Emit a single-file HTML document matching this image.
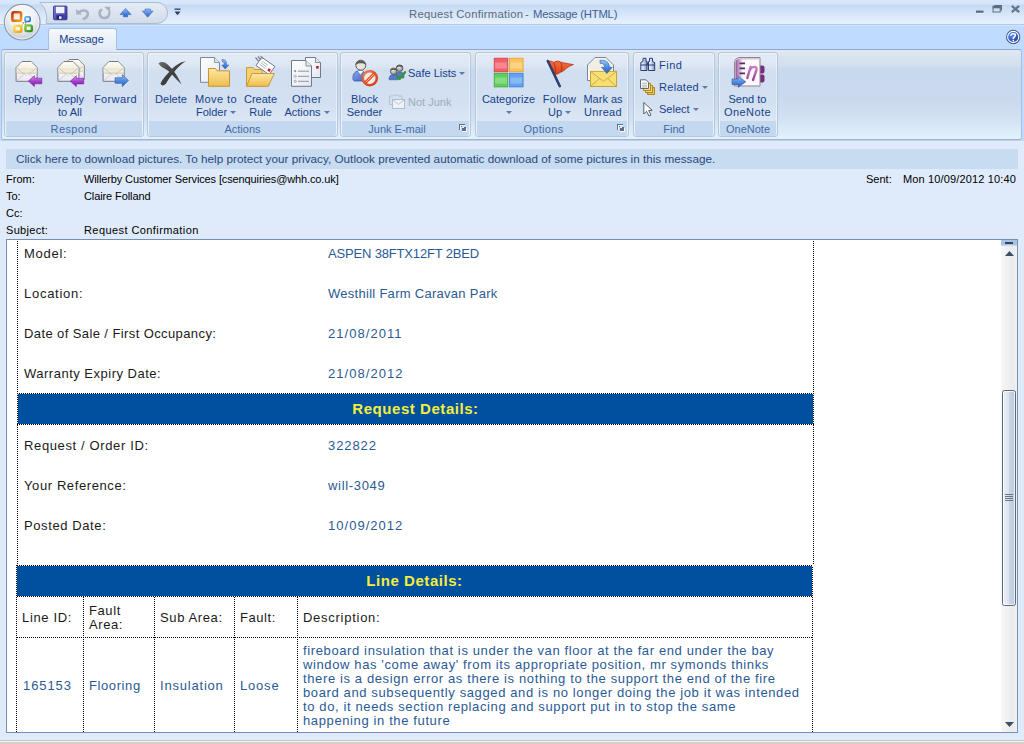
<!DOCTYPE html>
<html><head><meta charset="utf-8">
<style>
*{margin:0;padding:0;box-sizing:border-box}
html,body{width:1024px;height:744px;overflow:hidden;background:#dfebfb;font-family:"Liberation Sans",sans-serif}
.a{position:absolute}
#title{left:0;top:0;width:1024px;height:25px;background:linear-gradient(#d9e8fc 0,#d6e5fb 4px,#c7d9f1 5px,#cddff6 9px,#dae8f9 16px,#e3effc 22px,#e4f0fd 24px);border-bottom:1px solid #b3c9e4}
#tabs{left:0;top:25px;width:1024px;height:116px;background:linear-gradient(#d3e6fd 0,#d3e6fd 1px,#bfdbff 1px)}
#ribbon{left:1px;top:49px;width:1021px;height:91px;border:1px solid #a9c0dd;border-top-color:#8eaad2;border-bottom-color:#9cb5d5;border-radius:3px;background:linear-gradient(#e1e8f2 0,#d8e2ef 8px,#d4dfed 16px,#c9d9ed 18px,#cad9ed 50px,#d0dff1 65px,#dcebf9 80px,#e2f1fc 88px)}
#ribbon:after{content:"";position:absolute;left:0;right:0;bottom:-2px;height:1px;background:#bfd2ea}
.grp{position:absolute;top:52px;height:85px;border:1px solid #b3c7df;border-radius:3px;box-shadow:inset 0 0 0 1px rgba(255,255,255,.45);background:linear-gradient(#e3ebf6 0,#dde7f4 13px,#d2dff0 17px,#d3e0f1 50px,#dce7f5 68px)}
.grp .lb{position:absolute;left:1px;right:1px;bottom:0;height:15px;background:#c4d8ef;color:#3f6ba8;font-size:11px;text-align:center;line-height:17px;border-radius:0 0 2px 2px}
.bt{position:absolute;color:#15428b;font-size:11px;line-height:13px;text-align:center;white-space:nowrap}
.dd{display:inline-block;width:0;height:0;border-left:3px solid transparent;border-right:3px solid transparent;border-top:3px solid #5b7ba8;vertical-align:middle;margin-left:3px;position:relative;top:-1px}
#info{left:6px;top:149px;width:1012px;height:20px;background:#c7dbf1;color:#2a487c;font-size:11.7px;letter-spacing:0.02px;line-height:19px;padding-left:10px;white-space:nowrap}
.hd{position:absolute;font-size:11px;color:#000;white-space:nowrap;line-height:13px}
#body{left:6px;top:239px;width:1012px;height:494px;background:#fff;border:1px solid #7390b6}
#sb{left:1001px;top:240px;width:16px;height:492px;background:linear-gradient(90deg,#f7f7f7,#eeeeee 50%,#ebebeb 80%,#f4f2f2)}
.bd{position:absolute;font-size:13px;letter-spacing:0.6px;white-space:nowrap;line-height:15px}
.lbl{color:#1a1a1a}
.val{color:#2a5a95}
.bar{position:absolute;left:17px;width:796px;background:#0050a0;border-top:1px dotted #000;border-bottom:1px dotted #000}
.bar span{position:absolute;left:0;right:0;text-align:center;color:#f4ef3c;font-weight:bold;font-size:15px;letter-spacing:0.55px;line-height:17px}
.dv{position:absolute;width:1px;background:repeating-linear-gradient(to bottom,#000 0 1px,transparent 1px 2px)}
.dh{position:absolute;height:1px;background:repeating-linear-gradient(to right,#000 0 1px,transparent 1px 2px)}
.bt2{position:absolute;text-align:center;color:#f4ef3c;font-weight:bold;font-size:15px;letter-spacing:0.55px;line-height:17px;white-space:nowrap}
.vl{position:absolute;width:1px;border-left:1px dotted #000}
.hl{position:absolute;height:1px;border-top:1px dotted #000}
</style></head><body>
<!-- title bar -->
<div id="title" class="a"></div>
<div class="a" style="left:409px;top:8px;font-size:11.3px;line-height:13px;color:#5b6a7d;white-space:nowrap;letter-spacing:0.25px">Request Confirmation</div><div class="a" style="left:525px;top:8px;font-size:11.3px;line-height:13px;color:#5b6a7d">-</div><div class="a" style="left:533px;top:8px;font-size:11.3px;line-height:13px;color:#3f5f8f;white-space:nowrap;letter-spacing:-0.22px">Message (HTML)</div>
<div id="tabs" class="a"></div>
<div id="ribbon" class="a"></div>


<!-- tab + office button + QAT -->
<div class="a" style="left:48px;top:28px;width:69px;height:22px;z-index:2;border:1px solid #a7c0df;border-bottom:none;border-radius:3px 3px 0 0;background:linear-gradient(#f6f9fd,#e9f0f9 60%,#e2ebf7)"></div>
<div class="a" style="left:47px;top:33px;width:69px;text-align:center;font-size:11px;line-height:13px;color:#15428b;z-index:3">Message</div>
<svg class="a" style="left:0;top:0" width="200" height="48">
  <defs>
    <linearGradient id="qat" x1="0" y1="0" x2="0" y2="1"><stop offset="0" stop-color="#e6ecf5"/><stop offset=".5" stop-color="#dce4f0"/><stop offset="1" stop-color="#d0dbea"/></linearGradient>
    <radialGradient id="ob" cx=".5" cy=".35" r=".6"><stop offset="0" stop-color="#ffffff"/><stop offset=".6" stop-color="#eef1f5"/><stop offset="1" stop-color="#c9d0da"/></radialGradient>
    <linearGradient id="or" x1="0" y1="0" x2="1" y2="1"><stop offset="0" stop-color="#c8300c"/><stop offset="1" stop-color="#f8a41c"/></linearGradient>
    <linearGradient id="ye" x1="0" y1="0" x2="1" y2="1"><stop offset="0" stop-color="#fbe26a"/><stop offset="1" stop-color="#f0a500"/></linearGradient>
    <linearGradient id="gr" x1="0" y1="0" x2="1" y2="1"><stop offset="0" stop-color="#8ed04a"/><stop offset="1" stop-color="#2f8a22"/></linearGradient>
    <linearGradient id="bl" x1="0" y1="0" x2="1" y2="1"><stop offset="0" stop-color="#6fb6ee"/><stop offset="1" stop-color="#2a6fc4"/></linearGradient>
  </defs>
  <path d="M40 2.5 H157 A10.5 10.5 0 0 1 157 23.5 H46 A22 22 0 0 0 40 2.5 Z" fill="url(#qat)" stroke="#a9bdd6" stroke-width="1"/>
  <circle cx="22.2" cy="22.2" r="17.8" fill="url(#ob)" stroke="#8a9bb2" stroke-width="1.2"/>
  <circle cx="22.2" cy="22.2" r="16.6" fill="none" stroke="#ffffff" stroke-opacity=".7" stroke-width="1"/>
  <rect x="12.4" y="12.3" width="8.7" height="8.5" rx="1.6" fill="#f1efee" stroke="url(#or)" stroke-width="2.6"/>
  <rect x="25.1" y="16.9" width="5" height="4.4" rx="1" fill="#eef2f6" stroke="url(#bl)" stroke-width="1.8"/>
  <rect x="14.2" y="25.7" width="7.1" height="6.1" rx="1.3" fill="#f3f1ea" stroke="url(#ye)" stroke-width="2.4"/>
  <rect x="25.4" y="25.4" width="6.4" height="5.7" rx="1.3" fill="#eef2ec" stroke="url(#gr)" stroke-width="2.4"/>
  <circle cx="23.3" cy="22.8" r=".9" fill="#e07b22"/><circle cx="25.6" cy="22.4" r=".8" fill="#3d86d0"/>
  <circle cx="22.6" cy="25" r=".8" fill="#f2c53a"/><circle cx="25.2" cy="24.2" r=".7" fill="#4ea33a"/>
  <!-- save -->
  <defs><linearGradient id="sv" x1="0" y1="0" x2="1" y2="1"><stop offset="0" stop-color="#7b7fd8"/><stop offset="1" stop-color="#33349a"/></linearGradient></defs>
  <rect x="53.5" y="6" width="13.5" height="13.8" rx="1" fill="url(#sv)" stroke="#2c2e86" stroke-width=".8"/>
  <rect x="56" y="6.8" width="8.4" height="6.4" fill="#f2f3fa"/>
  <rect x="56.5" y="15.3" width="6" height="4" fill="#22246e"/><rect x="59" y="16.3" width="2.6" height="2.6" fill="#e8e9f6"/>
  <!-- undo (disabled) -->
  <path d="M78.5 12.5 C82 9.5 87.8 9.8 87.8 13.8 C87.8 16.3 86 18 83.8 18.8" fill="none" stroke="#a9b4c3" stroke-width="2.6" stroke-linecap="round"/>
  <path d="M76.2 8.8 L76.2 14.6 L82 14.6 Z" fill="#a9b4c3"/>
  <!-- redo (disabled) -->
  <path d="M101.2 9.8 C98.6 12 99 17.5 103.8 18 C107.6 18.4 109.6 15.5 109.3 12.5" fill="none" stroke="#a9b4c3" stroke-width="2.6" stroke-linecap="round"/>
  <path d="M104.2 6.8 L110.2 6.8 L110.2 12.8 Z" fill="#a9b4c3"/>
  <!-- up / down -->
  <defs><linearGradient id="ud" x1="0" y1="0" x2="0" y2="1"><stop offset="0" stop-color="#8ab8f4"/><stop offset="1" stop-color="#2b63c6"/></linearGradient></defs>
  <path d="M120 14.6 L125.6 8.4 L131.2 14.6 L127.7 14.6 V16.8 H123.3 V14.6 Z" fill="url(#ud)" stroke="#2a5cb4" stroke-width=".5" stroke-linejoin="round"/>
  <path d="M145 9 H150.4 V11 H153.1 L147.7 17.2 L142.3 11 H145 Z" fill="url(#ud)" stroke="#2a5cb4" stroke-width=".5" stroke-linejoin="round"/>
  <!-- customize -->
  <rect x="174.5" y="8.5" width="6" height="1.3" fill="#2b3f6b"/>
  <path d="M174.5 11.5 L180.5 11.5 L177.5 15.2 Z" fill="#2b3f6b"/>
</svg>
<!-- window buttons -->
<svg class="a" style="left:960px;top:0" width="64" height="50">
  <rect x="16" y="12.3" width="7.5" height="1.2" fill="#ffffff" opacity=".8"/>
  <rect x="16" y="10.6" width="7.5" height="2.2" fill="#5e6b7e"/>
  <path d="M34.5 5 H42 V10.5 H40.6 V6.4 H34.5 Z" fill="#5e6b7e"/>
  <rect x="33" y="6.2" width="7.2" height="5.8" fill="none" stroke="#5e6b7e" stroke-width="1"/>
  <rect x="33" y="6" width="7.2" height="2.3" fill="#5e6b7e"/>
  <path d="M51.8 5.8 L59.2 12.2 M59.2 5.8 L51.8 12.2" stroke="#66758a" stroke-width="2.3"/>
  <defs><radialGradient id="hlp" cx=".35" cy=".35" r=".7"><stop offset="0" stop-color="#5a8ef0"/><stop offset="1" stop-color="#1a3aa0"/></radialGradient></defs><circle cx="53.2" cy="37" r="6.6" fill="url(#hlp)" stroke="#4a5a78" stroke-width="1.1"/>
  <circle cx="53.2" cy="37" r="5.6" fill="none" stroke="#ffffff" stroke-width="1.1"/>
  <path d="M51 35.2 C51 33.2 55.4 33.2 55.4 35.3 C55.4 36.8 53.3 36.9 53.3 38.5" fill="none" stroke="#fff" stroke-width="1.6" stroke-linecap="round"/>
  <circle cx="53.3" cy="40.6" r=".9" fill="#fff"/>
</svg>

<!-- groups -->
<div class="grp" style="left:4px;width:140px"><div class="lb" style="letter-spacing:0.4px">Respond</div></div>
<div class="grp" style="left:147px;width:191px"><div class="lb">Actions</div></div>
<div class="grp" style="left:340px;width:131px"><div class="lb" style="padding-right:17px">Junk E-mail</div></div>
<div class="grp" style="left:475px;width:154px"><div class="lb" style="padding-right:17px;letter-spacing:0.3px">Options</div></div>
<div class="grp" style="left:633px;width:82px"><div class="lb">Find</div></div>
<div class="grp" style="left:718px;width:60px"><div class="lb">OneNote</div></div>



<!-- ribbon icons -->
<svg class="a" style="left:0;top:0" width="800" height="140">
<defs>
  <linearGradient id="flap" x1="0" y1="0" x2="0" y2="1"><stop offset="0" stop-color="#fdfbf4"/><stop offset="1" stop-color="#eee8d2"/></linearGradient>
  <linearGradient id="pocket" x1="0" y1="0" x2="0" y2="1"><stop offset="0" stop-color="#ffffff"/><stop offset="1" stop-color="#ece9f2"/></linearGradient>
  <linearGradient id="purp" x1="0" y1="0" x2="0" y2="1"><stop offset="0" stop-color="#e0a0f6"/><stop offset=".5" stop-color="#a93ed0"/><stop offset="1" stop-color="#7a1ea6"/></linearGradient>
  <linearGradient id="blu" x1="0" y1="0" x2="0" y2="1"><stop offset="0" stop-color="#9cc4f6"/><stop offset=".5" stop-color="#4f8de0"/><stop offset="1" stop-color="#2c5fb8"/></linearGradient>
  <linearGradient id="fold" x1="0" y1="0" x2="0" y2="1"><stop offset="0" stop-color="#fde7a6"/><stop offset="1" stop-color="#efbd4c"/></linearGradient>
  <linearGradient id="xg" x1="0" y1="0" x2="1" y2="1"><stop offset="0" stop-color="#707070"/><stop offset=".5" stop-color="#3c3c3c"/><stop offset="1" stop-color="#555555"/></linearGradient>
  <linearGradient id="doc" x1="0" y1="0" x2="1" y2="1"><stop offset="0" stop-color="#ffffff"/><stop offset="1" stop-color="#e3e8ef"/></linearGradient>
  <symbol id="env" viewBox="0 0 22 21" overflow="visible">
    <path d="M6.4 .5 H15.6 L21.5 6.6 V20.3 H.5 V6.6 Z" fill="url(#pocket)" stroke="#737a84" stroke-width="1"/>
    <path d="M6.6 1 H15.4 L21 6.8 V12 H1 V6.8 Z" fill="url(#flap)"/>
    <path d="M2 12.2 H20" stroke="#d9cfae" stroke-width="1.2"/>
    <path d="M2.5 8.2 H19.5" stroke="#e3dbbf" stroke-width=".8"/>
    <path d="M1 7 L10.5 14.5 M21 7 L12 14 M1 19.8 L8 13.5 M21 19.8 L14 13.5" stroke="#b9bcc6" stroke-width=".7" fill="none"/>
  </symbol>
  <symbol id="arrL" viewBox="0 0 14 11.2" overflow="visible">
    <path d="M.3 5.6 L6.3 .2 V2.7 H13.7 V8.3 H6.3 V11 Z" fill="url(#purp)" stroke="#6e1a96" stroke-width=".6" stroke-linejoin="round"/>
  </symbol>
  <symbol id="arrR" viewBox="0 0 14 12.3" overflow="visible">
    <path d="M13.7 6 L7.5 .2 V3.2 H.3 V8.8 H7.5 V12 Z" fill="url(#blu)" stroke="#2a56a6" stroke-width=".6" stroke-linejoin="round"/>
  </symbol>
</defs>
<!-- Reply -->
<use href="#env" x="15.6" y="61" width="22" height="21"/>
<use href="#arrL" x="28.1" y="75.5" width="14" height="11.2"/>
<!-- Reply to All -->
<use href="#env" x="62.8" y="59" width="22" height="21"/>
<use href="#env" x="57.4" y="61" width="22" height="21"/>
<use href="#arrL" x="70" y="75.6" width="14" height="11.2"/>
<!-- Forward -->
<use href="#env" x="102.6" y="61" width="22" height="21"/>
<use href="#arrR" x="114.8" y="74.5" width="14" height="12.3"/>
<!-- Delete -->
<path d="M158.5 63.5 C163 59.5 168 64 172 69 C176 74 179.5 79.5 181.6 84.5 C177 80 173 75.5 169.5 72 C166 68.5 160.5 67.5 158.5 63.5 Z" fill="url(#xg)"/>
<path d="M186 61.2 C180 62 175 65.5 170 71 C166 75.5 162 79.5 160.5 83.5 C161.5 86.5 164.5 85.5 166 83.5 C169 78 173 73 177 68.5 C180 65 183 62.8 186 61.2 Z" fill="url(#xg)"/>
<!-- Move to folder -->
<path d="M200.5 57.5 H214.5 L219.5 62.5 V82.3 H200.5 Z" fill="url(#doc)" stroke="#7a8596" stroke-width="1"/>
<path d="M214.5 57.5 V62.5 H219.5" fill="#dfe5ee" stroke="#7a8596" stroke-width=".8"/>
<path d="M208.5 68.5 H215.5 L217 70.8 H229.5 V86.3 H208.5 Z" fill="url(#fold)" stroke="#c29638" stroke-width="1"/>
<path d="M222 59.5 C226 59.5 226.5 61.5 226.5 64 V65 L228.8 65 L225.2 69 L221.6 65 L224 65 V63.5 C224 62 223.5 61.5 222 61.5 Z" fill="url(#blu)" stroke="#2a5ab0" stroke-width=".5"/>
<!-- Create rule -->
<path d="M246.5 67.5 H253 L254.5 69.5 H262 V86 H246.5 Z" fill="#f5cf70" stroke="#c59a3a" stroke-width="1"/>
<g transform="rotate(35 265.5 66)"><rect x="257.5" y="61" width="16" height="10" fill="#fff" stroke="#6e7888" stroke-width=".9"/><path d="M260 64 H267 M260 66 H267 M260 68 H267" stroke="#9aa3b0" stroke-width=".7"/><rect x="269.5" y="66" width="2.6" height="2.6" fill="#c8102e"/></g>
<path d="M252 73.5 H274.3 L268.3 86.3 H246.5 Z" fill="url(#fold)" stroke="#c59a3a" stroke-width="1"/>
<path d="M255.5 57.5 L258.5 61 M258 56.5 L261 60 M260.5 55.8 L263 58.5" stroke="#7b8494" stroke-width="1.2"/>
<!-- Other actions -->
<path d="M305.5 57.5 H315.5 L320.5 62.5 V77.5 H305.5 Z" fill="url(#doc)" stroke="#6f7a8a" stroke-width="1"/>
<path d="M315.5 57.5 V62.5 H320.5" fill="#e5eaf1" stroke="#6f7a8a" stroke-width=".8"/>
<rect x="316.2" y="66" width="2.4" height="2.6" fill="#b0102a"/>
<path d="M291.5 60.5 H306 L311.5 66 V86.3 H291.5 Z" fill="url(#doc)" stroke="#6f7a8a" stroke-width="1"/>
<path d="M306 60.5 V66 H311.5" fill="#e5eaf1" stroke="#6f7a8a" stroke-width=".8"/>
<circle cx="295.2" cy="71.2" r="1.1" fill="#8a94a3"/><circle cx="295.2" cy="76.3" r="1.1" fill="none" stroke="#8a94a3" stroke-width=".7"/><circle cx="295.2" cy="81.3" r="1.1" fill="none" stroke="#8a94a3" stroke-width=".7"/>
<path d="M298 71.2 H309 M298 76.3 H309 M298 81.3 H309" stroke="#8a94a3" stroke-width="1"/>
<!-- Block sender -->
<defs><linearGradient id="bdy" x1="0" y1="0" x2="1" y2="1"><stop offset="0" stop-color="#8aa8f0"/><stop offset="1" stop-color="#3f62c0"/></linearGradient>
<radialGradient id="ring" cx=".4" cy=".35" r=".7"><stop offset="0" stop-color="#f8a070"/><stop offset="1" stop-color="#d8401a"/></radialGradient></defs>
<path d="M353 79 C352.5 73.5 355.5 70.8 360 70.8 C364.5 70.8 365.5 73.5 365.5 76 V81 H355 C353.8 81 353 80.3 353 79 Z" fill="url(#bdy)" stroke="#3a56a0" stroke-width=".8"/>
<path d="M358 71 L360.5 74.5 L363 71 Z" fill="#fff"/>
<circle cx="360.8" cy="65.2" r="5" fill="#e6e4de" stroke="#5c5c5c" stroke-width="1"/>
<path d="M355.8 65 C355.5 59.5 366 59.3 365.8 65 C364.5 62.8 357.5 62.6 355.8 65 Z" fill="#5a5a5a"/>
<circle cx="369.8" cy="78.2" r="7" fill="#eeeae8" stroke="url(#ring)" stroke-width="2.6"/>
<path d="M364.9 83.1 L374.7 73.3" stroke="#e24e22" stroke-width="3"/>
<path d="M365.6 82.4 L374 74" stroke="#fbd0bc" stroke-width=".8"/>
<!-- Safe lists -->
<defs><radialGradient id="hd" cx=".4" cy=".35" r=".7"><stop offset="0" stop-color="#e9e7e2"/><stop offset="1" stop-color="#8d8d8d"/></radialGradient></defs>
<path d="M395.5 77 C395.5 73 397.5 72 400 72 C402.5 72 404 73 404 76 V78 H395.5Z" fill="#5577cc" stroke="#334f9a" stroke-width=".5"/>
<circle cx="399.6" cy="68.2" r="3.3" fill="url(#hd)" stroke="#4a4a4a" stroke-width=".8"/>
<path d="M396.3 67.5 C396.5 64.6 402.8 64.6 402.9 67.5 C401 66.2 398 66.2 396.3 67.5Z" fill="#4a4a4a"/>
<path d="M389 79.7 C389 75.5 391 74.5 393.8 74.5 C396.6 74.5 398.2 75.5 398.2 78.6 V79.8 H389Z" fill="#5577cc" stroke="#334f9a" stroke-width=".5"/>
<circle cx="393.7" cy="71.3" r="3.3" fill="url(#hd)" stroke="#4a4a4a" stroke-width=".8"/>
<path d="M390.4 70.6 C390.6 67.7 396.9 67.7 397 70.6 C395 69.3 392 69.3 390.4 70.6Z" fill="#4a4a4a"/>
<path d="M396.8 75.8 L399.6 79 L405 72.2" fill="none" stroke="#2f9a2a" stroke-width="2.3" stroke-linejoin="round" stroke-linecap="round"/>
<!-- Not junk (disabled) -->
<path d="M389.5 96 H393 L394 95 H397.5 L398.5 96 H402 V104.5 H389.5 Z" fill="none" stroke="#b9c2ce" stroke-width="1"/>
<rect x="392.5" y="99.5" width="12" height="9" fill="#eef2f7" stroke="#b2bcc9" stroke-width="1"/>
<path d="M392.8 99.8 L398.5 104.5 L404.2 99.8" fill="none" stroke="#b2bcc9" stroke-width=".9"/>
<!-- launchers -->
<g fill="#ffffff" opacity=".85"><rect x="460" y="125" width="1" height="5"/><rect x="460" y="125" width="5" height="1"/><rect x="462" y="131" width="4" height="1"/><rect x="466" y="128" width="1" height="4"/></g>
<g fill="#5f6f85"><rect x="459" y="124" width="1" height="6"/><rect x="459" y="124" width="6" height="1"/><rect x="462" y="127" width="4" height="4"/><rect x="461" y="126" width="1" height="1"/></g>
<rect x="462" y="127" width="2" height="1" fill="#e8eef6"/>
<g fill="#ffffff" opacity=".85"><rect x="618" y="125" width="1" height="5"/><rect x="618" y="125" width="5" height="1"/><rect x="620" y="131" width="4" height="1"/><rect x="624" y="128" width="1" height="4"/></g>
<g fill="#5f6f85"><rect x="617" y="124" width="1" height="6"/><rect x="617" y="124" width="6" height="1"/><rect x="620" y="127" width="4" height="4"/><rect x="619" y="126" width="1" height="1"/></g>
<rect x="620" y="127" width="2" height="1" fill="#e8eef6"/>
<!-- Categorize -->
<rect x="494.2" y="58.2" width="13.6" height="13.6" fill="#f2606a" stroke="#d23c48" stroke-width=".8"/>
<rect x="509.5" y="58.2" width="13.6" height="13.6" fill="#fcc35a" stroke="#e0a030" stroke-width=".8"/>
<rect x="494.2" y="73.3" width="13.6" height="13.6" fill="#60d05a" stroke="#3ea63a" stroke-width=".8"/>
<rect x="509.5" y="73.3" width="13.6" height="13.6" fill="#62a2f2" stroke="#3f7fd2" stroke-width=".8"/>
<path d="M495 65.5 H507 M510.3 65.5 H522.3 M495 80.5 H507 M510.3 80.5 H522.3" stroke="#ffffff" stroke-opacity=".25" stroke-width="6"/>
<!-- Follow up flag -->
<defs><linearGradient id="flg" x1="0" y1="0" x2="0" y2="1"><stop offset="0" stop-color="#f4703c"/><stop offset="1" stop-color="#d83a1a"/></linearGradient></defs>
<path d="M548.5 61.6 C550.5 60.6 552.5 61.2 553.8 62.6 C555.5 60.8 558.5 60.6 560.8 62.2 C563.5 62.8 568.5 63.8 573.5 64.6 C569.5 66 566.5 68 564 70.5 C561.5 72.3 559.5 72.3 558 74 C557 73.8 556 74.5 555 75.8 Z" fill="url(#flg)" stroke="#b02c14" stroke-width=".7" stroke-linejoin="round"/>
<path d="M553.8 62.8 C555 66 555.8 69.5 555.5 73 M560.8 62.4 C562 65 562.3 68.5 561 72" stroke="#a82812" stroke-width=".8" fill="none"/>
<path d="M547.8 61 L559.8 86.2" stroke="#2f4070" stroke-width="2.6" stroke-linecap="round"/>
<!-- Mark as unread -->
<path d="M587.5 65 L595 57.5 H606 L613.5 65 V80.5 H587.5 Z" fill="#fbfbfa" stroke="#7c8494" stroke-width="1"/>
<path d="M588.5 65.5 L595.5 58.5 H605.5 L612.5 65.5 V70 H588.5 Z" fill="#f1eee6"/>
<rect x="590.5" y="71.3" width="26" height="15.2" fill="#f8df72" stroke="#c6a23c" stroke-width="1"/>
<path d="M591 71.8 L603.5 81.5 L616 71.8 M591 86 L599.5 78.5 M616 86 L607.5 78.5" fill="none" stroke="#c9a640" stroke-width=".9"/>
<path d="M600 60.3 C605.5 59.5 609.3 62.5 609.3 66.5 V67.3 L612.3 67.3 L606.9 73.5 L601.5 67.3 L604.5 67.3 V66.5 C604.5 64.3 602.8 63 600 63.3 Z" fill="url(#blu)" stroke="#2a5ab0" stroke-width=".6"/>
<!-- Find binoculars -->
<defs><linearGradient id="bn" x1="0" y1="0" x2="1" y2="0"><stop offset="0" stop-color="#f4f7fc"/><stop offset=".5" stop-color="#c9d5ea"/><stop offset="1" stop-color="#7e93c0"/></linearGradient></defs>
<rect x="646" y="62.5" width="3" height="3" fill="#2c3e78"/>
<path d="M643 58.3 H646 V61.5 H647 V70.5 H640.8 V62.5 L643 61.5 Z" fill="url(#bn)" stroke="#2c3e78" stroke-width="1" stroke-linejoin="round"/>
<path d="M649.5 58.3 H652.5 V61.5 L654.7 62.5 V70.5 H648.5 V61.5 H649.5 Z" fill="url(#bn)" stroke="#2c3e78" stroke-width="1" stroke-linejoin="round"/>
<path d="M641 65 H647 M648.5 65 H654.5" stroke="#2c3e78" stroke-width="1"/>
<!-- Related -->
<path d="M647.5 87.5 H654.5 V94.5 H647.5 Z" fill="#f0c64a" stroke="#a67c1c" stroke-width=".9"/>
<path d="M645.5 85.5 H652.5 V92.5 H645.5 Z" fill="#f7d868" stroke="#a67c1c" stroke-width=".9"/>
<path d="M643.5 83.5 H650.5 V90.5 H643.5 Z" fill="#f9e07c" stroke="#a67c1c" stroke-width=".9"/>
<path d="M640.5 79.8 H646 L648.5 82.3 V88.5 H640.5 Z" fill="#ffffff" stroke="#4f5b6e" stroke-width=".9"/>
<path d="M642 83.2 H647 M642 85.2 H647 M642 87 H647" stroke="#8f99a8" stroke-width=".8"/>
<!-- Select cursor -->
<path d="M643.8 102.5 V114 L646.5 111.3 L649 116 L651 115 L648.7 110.5 L652.2 110.3 Z" fill="#ffffff" stroke="#555d6a" stroke-width="1" stroke-linejoin="round"/>
<!-- OneNote -->
<defs>
<linearGradient id="onL" x1="0" y1="0" x2="1" y2="0"><stop offset="0" stop-color="#8a4a90"/><stop offset=".6" stop-color="#c49ac8" stop-opacity=".6"/><stop offset="1" stop-color="#ffffff" stop-opacity="0"/></linearGradient>
<linearGradient id="onN" x1="0" y1="0" x2="0" y2="1"><stop offset="0" stop-color="#c47cc4"/><stop offset="1" stop-color="#9a3f98"/></linearGradient>
</defs>
<path d="M760 65.5 h2.5 c1.5 0 2 1 2 2.5 v3 c0 1.5 -.5 2.5 -2 2.5 H760 Z M760 74.5 h2.5 c1.5 0 2 1 2 2.5 v3 c0 1.5 -.5 2.5 -2 2.5 H760 Z" fill="#7a2d7c"/>
<path d="M740 57.5 H760 V86 H734.5 V63 C734.5 59.5 736.5 57.5 740 57.5 Z" fill="#fdf8fc" stroke="#8f8590" stroke-width="1"/>
<path d="M740 58.5 H744 V85 H735.5 V63 C735.5 60 737 58.5 740 58.5 Z" fill="url(#onL)"/>
<path d="M738.5 58.8 H758.8" stroke="#c9b9c9" stroke-width="1.2"/>
<path d="M739.5 63.3 H745 M739.5 68.3 H745 M739.5 73.3 H745" stroke="#5b2a60" stroke-width="1.8"/>
<path d="M747.3 78 L750.6 66.8 M749.6 70.5 C751.5 66 757.5 65.5 756.5 70 L753 80" fill="none" stroke="url(#onN)" stroke-width="2.3" stroke-linecap="round"/>
<path d="M732 79 H738.3 V76.3 L745.8 81.8 L738.3 87.3 V84.6 H732 Z" fill="url(#blu)" stroke="#2a56a6" stroke-width=".6" stroke-linejoin="round"/>
</svg>

<!-- ribbon labels -->
<div class="bt" style="left:8px;width:40px;top:93px">Reply</div>
<div class="bt" style="left:50px;width:40px;top:93px">Reply<br>to All</div>
<div class="bt" style="left:93px;width:45px;top:93px;letter-spacing:0.4px">Forward</div>
<div class="bt" style="left:151px;width:40px;top:93px">Delete</div>
<div class="bt" style="left:191px;width:50px;top:93px"><span style="letter-spacing:0.4px">Move to</span><br>Folder<span class="dd"></span></div>
<div class="bt" style="left:240px;width:41px;top:93px">Create<br>Rule</div>
<div class="bt" style="left:282px;width:50px;top:93px"><span style="letter-spacing:0.5px">Other</span><br>Actions<span class="dd"></span></div>
<div class="bt" style="left:344px;width:41px;top:93px">Block<br>Sender</div>
<div class="bt" style="left:480px;width:57px;top:93px">Categorize<br><span class="dd" style="margin-left:0"></span></div>
<div class="bt" style="left:539px;width:41px;top:93px"><span style="letter-spacing:0.3px">Follow</span><br>Up<span class="dd"></span></div>
<div class="bt" style="left:582px;width:42px;top:93px">Mark as<br><span style="letter-spacing:0.3px">Unread</span></div>
<div class="bt" style="left:722px;width:51px;top:93px">Send to<br><span style="letter-spacing:0.4px">OneNote</span></div>
<div class="bt" style="left:408px;top:67px;text-align:left">Safe Lists<span class="dd" style="margin-left:3px"></span></div>
<div class="bt" style="left:408px;top:96px;text-align:left;color:#a3acb8">Not Junk</div>
<div class="bt" style="left:659px;top:59px;text-align:left;letter-spacing:0.5px">Find</div>
<div class="bt" style="left:659px;top:81px;text-align:left;letter-spacing:0.3px">Related<span class="dd" style="margin-left:3px"></span></div>
<div class="bt" style="left:659px;top:103px;text-align:left">Select<span class="dd" style="margin-left:3px"></span></div>

<!-- info bar -->
<div id="info" class="a">Click here to download pictures. To help protect your privacy, Outlook prevented automatic download of some pictures in this message.</div>

<!-- header -->
<div class="hd" style="left:6px;top:173px">From:</div>
<div class="hd" style="left:84px;top:173px;letter-spacing:-0.12px">Willerby Customer Services [csenquiries@whh.co.uk]</div>
<div class="hd" style="left:6px;top:190px">To:</div>
<div class="hd" style="left:84px;top:190px;letter-spacing:-0.1px">Claire Folland</div>
<div class="hd" style="left:6px;top:207px">Cc:</div>
<div class="hd" style="left:6px;top:224px;letter-spacing:0.3px">Subject:</div>
<div class="hd" style="left:84px;top:224px;letter-spacing:0.42px">Request Confirmation</div>
<div class="hd" style="left:866px;top:173px">Sent:</div>
<div class="hd" style="left:903px;top:173px;letter-spacing:0.15px">Mon 10/09/2012 10:40</div>

<!-- body -->
<div id="body" class="a"></div>
<div id="sb" class="a"></div>
<svg class="a" style="left:1001px;top:240px" width="16" height="492">
  <defs>
    <linearGradient id="th" x1="0" y1="0" x2="1" y2="0"><stop offset="0" stop-color="#eef2f8"/><stop offset=".45" stop-color="#dde5ef"/><stop offset=".55" stop-color="#c9d5e4"/><stop offset="1" stop-color="#bccadd"/></linearGradient>
  </defs>
  <rect x="0" y="0" width="16" height="6" fill="#a9c3e8"/>
  <rect x="0" y="5" width="16" height="1" fill="#c9daf2"/>
  <rect x="4" y="2" width="8" height="2" fill="#33445f"/>
  <path d="M4 16 L8.5 11 L13 16 Z" fill="#3c4d6a"/>
  <rect x="1.5" y="150.5" width="13" height="215" rx="2" fill="url(#th)" stroke="#5d6a80" stroke-width="1"/>
  <rect x="2.5" y="151.5" width="11" height="213" rx="1" fill="none" stroke="#ffffff" stroke-opacity=".7" stroke-width="1"/>
  <path d="M4 254.5 H12 M4 256.5 H12 M4 258.5 H12 M4 260.5 H12" stroke="#6a7384" stroke-width="1"/>
  <path d="M4 482 L13 482 L8.5 487 Z" fill="#3c4d6a"/>
</svg>

<!-- body content -->
<div class="dv" style="left:17px;top:241px;height:323px"></div>
<div class="dv" style="left:813px;top:241px;height:323px"></div>
<div class="bd lbl" style="left:24px;top:246px;letter-spacing:0.73px">Model:</div>
<div class="bd val" style="left:328px;top:246px;letter-spacing:-0.17px">ASPEN 38FTX12FT 2BED</div>
<div class="bd lbl" style="left:24px;top:286px;letter-spacing:0.73px">Location:</div>
<div class="bd val" style="left:328px;top:286px;letter-spacing:0.28px">Westhill Farm Caravan Park</div>
<div class="bd lbl" style="left:24px;top:326px;letter-spacing:0.4px">Date of Sale / First Occupancy:</div>
<div class="bd val" style="left:328px;top:326px;letter-spacing:1.05px">21/08/2011</div>
<div class="bd lbl" style="left:24px;top:366px;letter-spacing:0.5px">Warranty Expiry Date:</div>
<div class="bd val" style="left:328px;top:366px;letter-spacing:1.05px">21/08/2012</div>
<div class="a" style="left:18px;top:394px;width:795px;height:30px;background:#0050a0"></div>
<div class="dh" style="left:17px;top:393px;width:797px"></div>
<div class="dh" style="left:17px;top:424px;width:797px"></div>
<div class="bt2" style="left:17px;width:797px;top:400px">Request Details:</div>
<div class="bd lbl" style="left:24px;top:438px;letter-spacing:0.63px">Request / Order ID:</div>
<div class="bd val" style="left:328px;top:438px;letter-spacing:0.9px">322822</div>
<div class="bd lbl" style="left:24px;top:478px;letter-spacing:0.6px">Your Reference:</div>
<div class="bd val" style="left:328px;top:478px;letter-spacing:0.68px">will-3049</div>
<div class="bd lbl" style="left:24px;top:518px;letter-spacing:0.6px">Posted Date:</div>
<div class="bd val" style="left:328px;top:518px;letter-spacing:1.03px">10/09/2012</div>
<div class="a" style="left:17px;top:566px;width:795px;height:30px;background:#0050a0"></div>
<div class="dh" style="left:17px;top:565px;width:796px"></div>
<div class="dh" style="left:17px;top:596px;width:796px"></div>
<div class="a" style="left:16px;top:565px;width:1px;height:1px;background:#000"></div>
<div class="dv" style="left:16px;top:567px;height:165px"></div>
<div class="dv" style="left:812px;top:567px;height:165px"></div>
<div class="bt2" style="left:16px;width:797px;top:572px">Line Details:</div>
<div class="dv" style="left:83px;top:597px;height:135px"></div>
<div class="dv" style="left:154px;top:597px;height:135px"></div>
<div class="dv" style="left:234px;top:597px;height:135px"></div>
<div class="dv" style="left:297px;top:597px;height:135px"></div>
<div class="dh" style="left:17px;top:637px;width:796px"></div>
<div class="bd lbl" style="left:22px;top:610px;letter-spacing:0.65px">Line ID:</div>
<div class="bd lbl" style="left:89px;top:604px;line-height:14px">Fault<br>Area:</div>
<div class="bd lbl" style="left:160px;top:610px;letter-spacing:0.62px">Sub Area:</div>
<div class="bd lbl" style="left:240px;top:610px;letter-spacing:0.57px">Fault:</div>
<div class="bd lbl" style="left:303px;top:610px;letter-spacing:0.73px">Description:</div>
<div class="bd val" style="left:23px;top:678px;letter-spacing:0.9px">165153</div>
<div class="bd val" style="left:89px;top:678px;letter-spacing:0.6px">Flooring</div>
<div class="bd val" style="left:160px;top:678px;letter-spacing:0.8px">Insulation</div>
<div class="bd val" style="left:240px;top:678px;letter-spacing:0.8px">Loose</div>
<div class="bd val" style="left:303px;top:644px;line-height:14px;letter-spacing:0.62px">fireboard insulation that is under the van floor at the far end under the bay<br>window has 'come away' from its appropriate position, mr symonds thinks<br>there is a design error as there is nothing to the support the end of the fire<br>board and subsequently sagged and is no longer doing the job it was intended<br>to do, it needs section replacing and support put in to stop the same<br>happening in the future</div>
<!-- bottom strip -->
<div class="a" style="left:0;top:740px;width:1024px;height:1px;background:#c9c9c9"></div>
<div class="a" style="left:0;top:741px;width:1024px;height:1px;background:#f4f2ee"></div>
<div class="a" style="left:0;top:742px;width:1024px;height:2px;background:#d6cfc7"></div>
</body></html>
